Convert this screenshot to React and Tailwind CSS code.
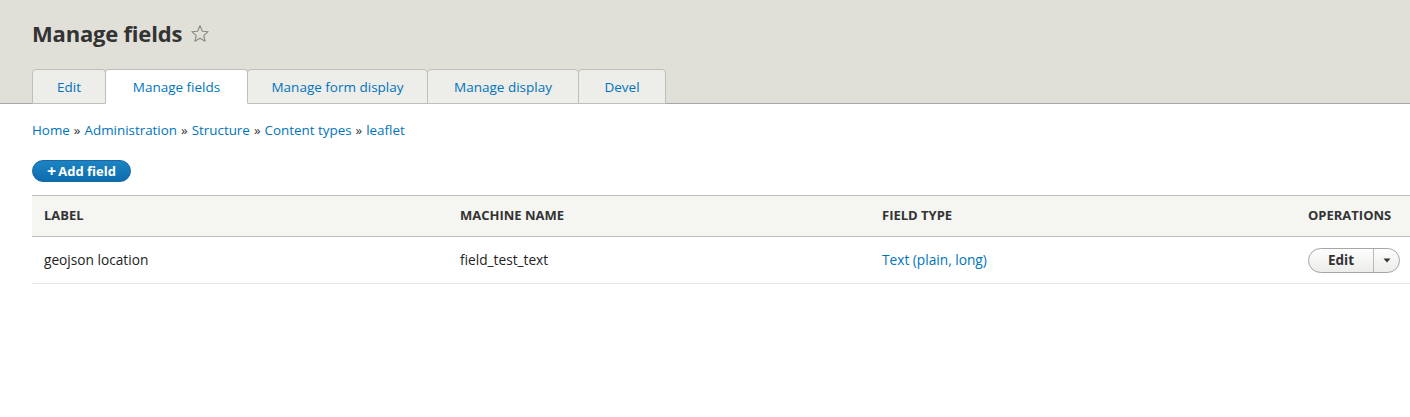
import React from 'react';

const tabs = [
  { label: 'Edit', w: 'w-[74px]' },
  { label: 'Manage fields', w: 'w-[143px]', active: true },
  { label: 'Manage form display', w: 'w-[181px]' },
  { label: 'Manage display', w: 'w-[152px]' },
  { label: 'Devel', w: 'w-[88px]' },
];

const crumbs = ['Home', 'Administration', 'Structure', 'Content types', 'leaflet'];

function Star() {
  return (
    <svg width="20" height="20" viewBox="0 0 20 20" className="ml-[8px] mt-[2px]">
      <path
        d="M10 1.8l2.35 5.4 5.85.5-4.45 3.85 1.35 5.75L10 14.3l-5.1 3 1.35-5.75L1.8 7.7l5.85-.5z"
        fill="none"
        stroke="#8a8a80"
        strokeWidth="1.1"
        strokeLinejoin="round"
      />
    </svg>
  );
}

export default function App() {
  return (
    <div className="w-[1410px] h-[417px] bg-white text-[#222] font-['Open_Sans',sans-serif] overflow-hidden">
      <header className="bg-[#e0e0d8] border-b border-[#a6a6a6] h-[104px] px-[32px] flex flex-col">
        <div className="flex items-center pt-[16px] h-[50px]">
          <h1 className="text-[22px] font-bold text-[#333] leading-none tracking-[-0.2px]">Manage fields</h1>
          <Star />
        </div>
        <nav className="flex mt-auto -mb-px">
          {tabs.map((t) => (
            <a
              key={t.label}
              className={`${t.w} h-[35px] pt-[1px] flex items-center justify-center text-[13.5px] text-[#0074bd] border border-[#bfbfba] rounded-t-[4px] -mr-px ${
                t.active ? 'bg-white border-b-white relative z-10' : 'bg-[#ededea]'
              }`}
            >
              {t.label}
            </a>
          ))}
        </nav>
      </header>

      <div className="pl-[32px] pt-[16px] text-[13.4px] text-[#0074bd]">
        {crumbs.map((c, i) => (
          <span key={c}>
            {i > 0 && <span className="text-[#333] mx-[4px]">»</span>}
            {c}
          </span>
        ))}
      </div>

      <div className="pl-[32px] pt-[20px]">
        <button className="h-[22px] w-[99px] rounded-full bg-gradient-to-b from-[#1d84c3] to-[#0c6db0] border border-[#1868a4] text-white text-[13px] font-bold flex items-center justify-center leading-none">
          <span className="text-[16px] font-bold mr-[2px] -mt-[1px]">+</span>Add field
        </button>
      </div>

      <div className="pl-[32px] pt-[13px]">
        <table className="w-full border-collapse text-[13.7px]">
          <thead>
            <tr className="bg-[#f5f5f2] border-t border-b border-[#bfbfba] h-[41px]">
              <th className="w-[416px] text-left font-bold text-[13px] uppercase text-[#333] pl-[12px]">Label</th>
              <th className="w-[422px] text-left font-bold text-[13px] uppercase text-[#333] pl-[12px]">Machine name</th>
              <th className="w-[426px] text-left font-bold text-[13px] uppercase text-[#333] pl-[12px]">Field type</th>
              <th className="text-left font-bold text-[13px] uppercase text-[#333] pl-[12px]">Operations</th>
            </tr>
          </thead>
          <tbody>
            <tr className="border-b border-[#e6e4df] h-[47px]">
              <td className="pl-[12px]">geojson location</td>
              <td className="pl-[12px]">field_test_text</td>
              <td className="pl-[12px] text-[#0074bd]">Text (plain, long)</td>
              <td className="pl-[12px]">
                <div className="flex w-[92px] h-[25px] rounded-full border border-[#a6a6a6] bg-gradient-to-b from-[#fdfdfd] to-[#ececea] overflow-hidden">
                  <span className="flex-1 flex items-center justify-center font-bold text-[#333] text-[13.5px]">Edit</span>
                  <span className="w-[26px] border-l border-[#b8b8b4] flex items-center justify-center">
                    <svg width="8" height="5" viewBox="0 0 8 5">
                      <path d="M0.5 0.5h7L4 4.5z" fill="#333" />
                    </svg>
                  </span>
                </div>
              </td>
            </tr>
          </tbody>
        </table>
      </div>
    </div>
  );
}
